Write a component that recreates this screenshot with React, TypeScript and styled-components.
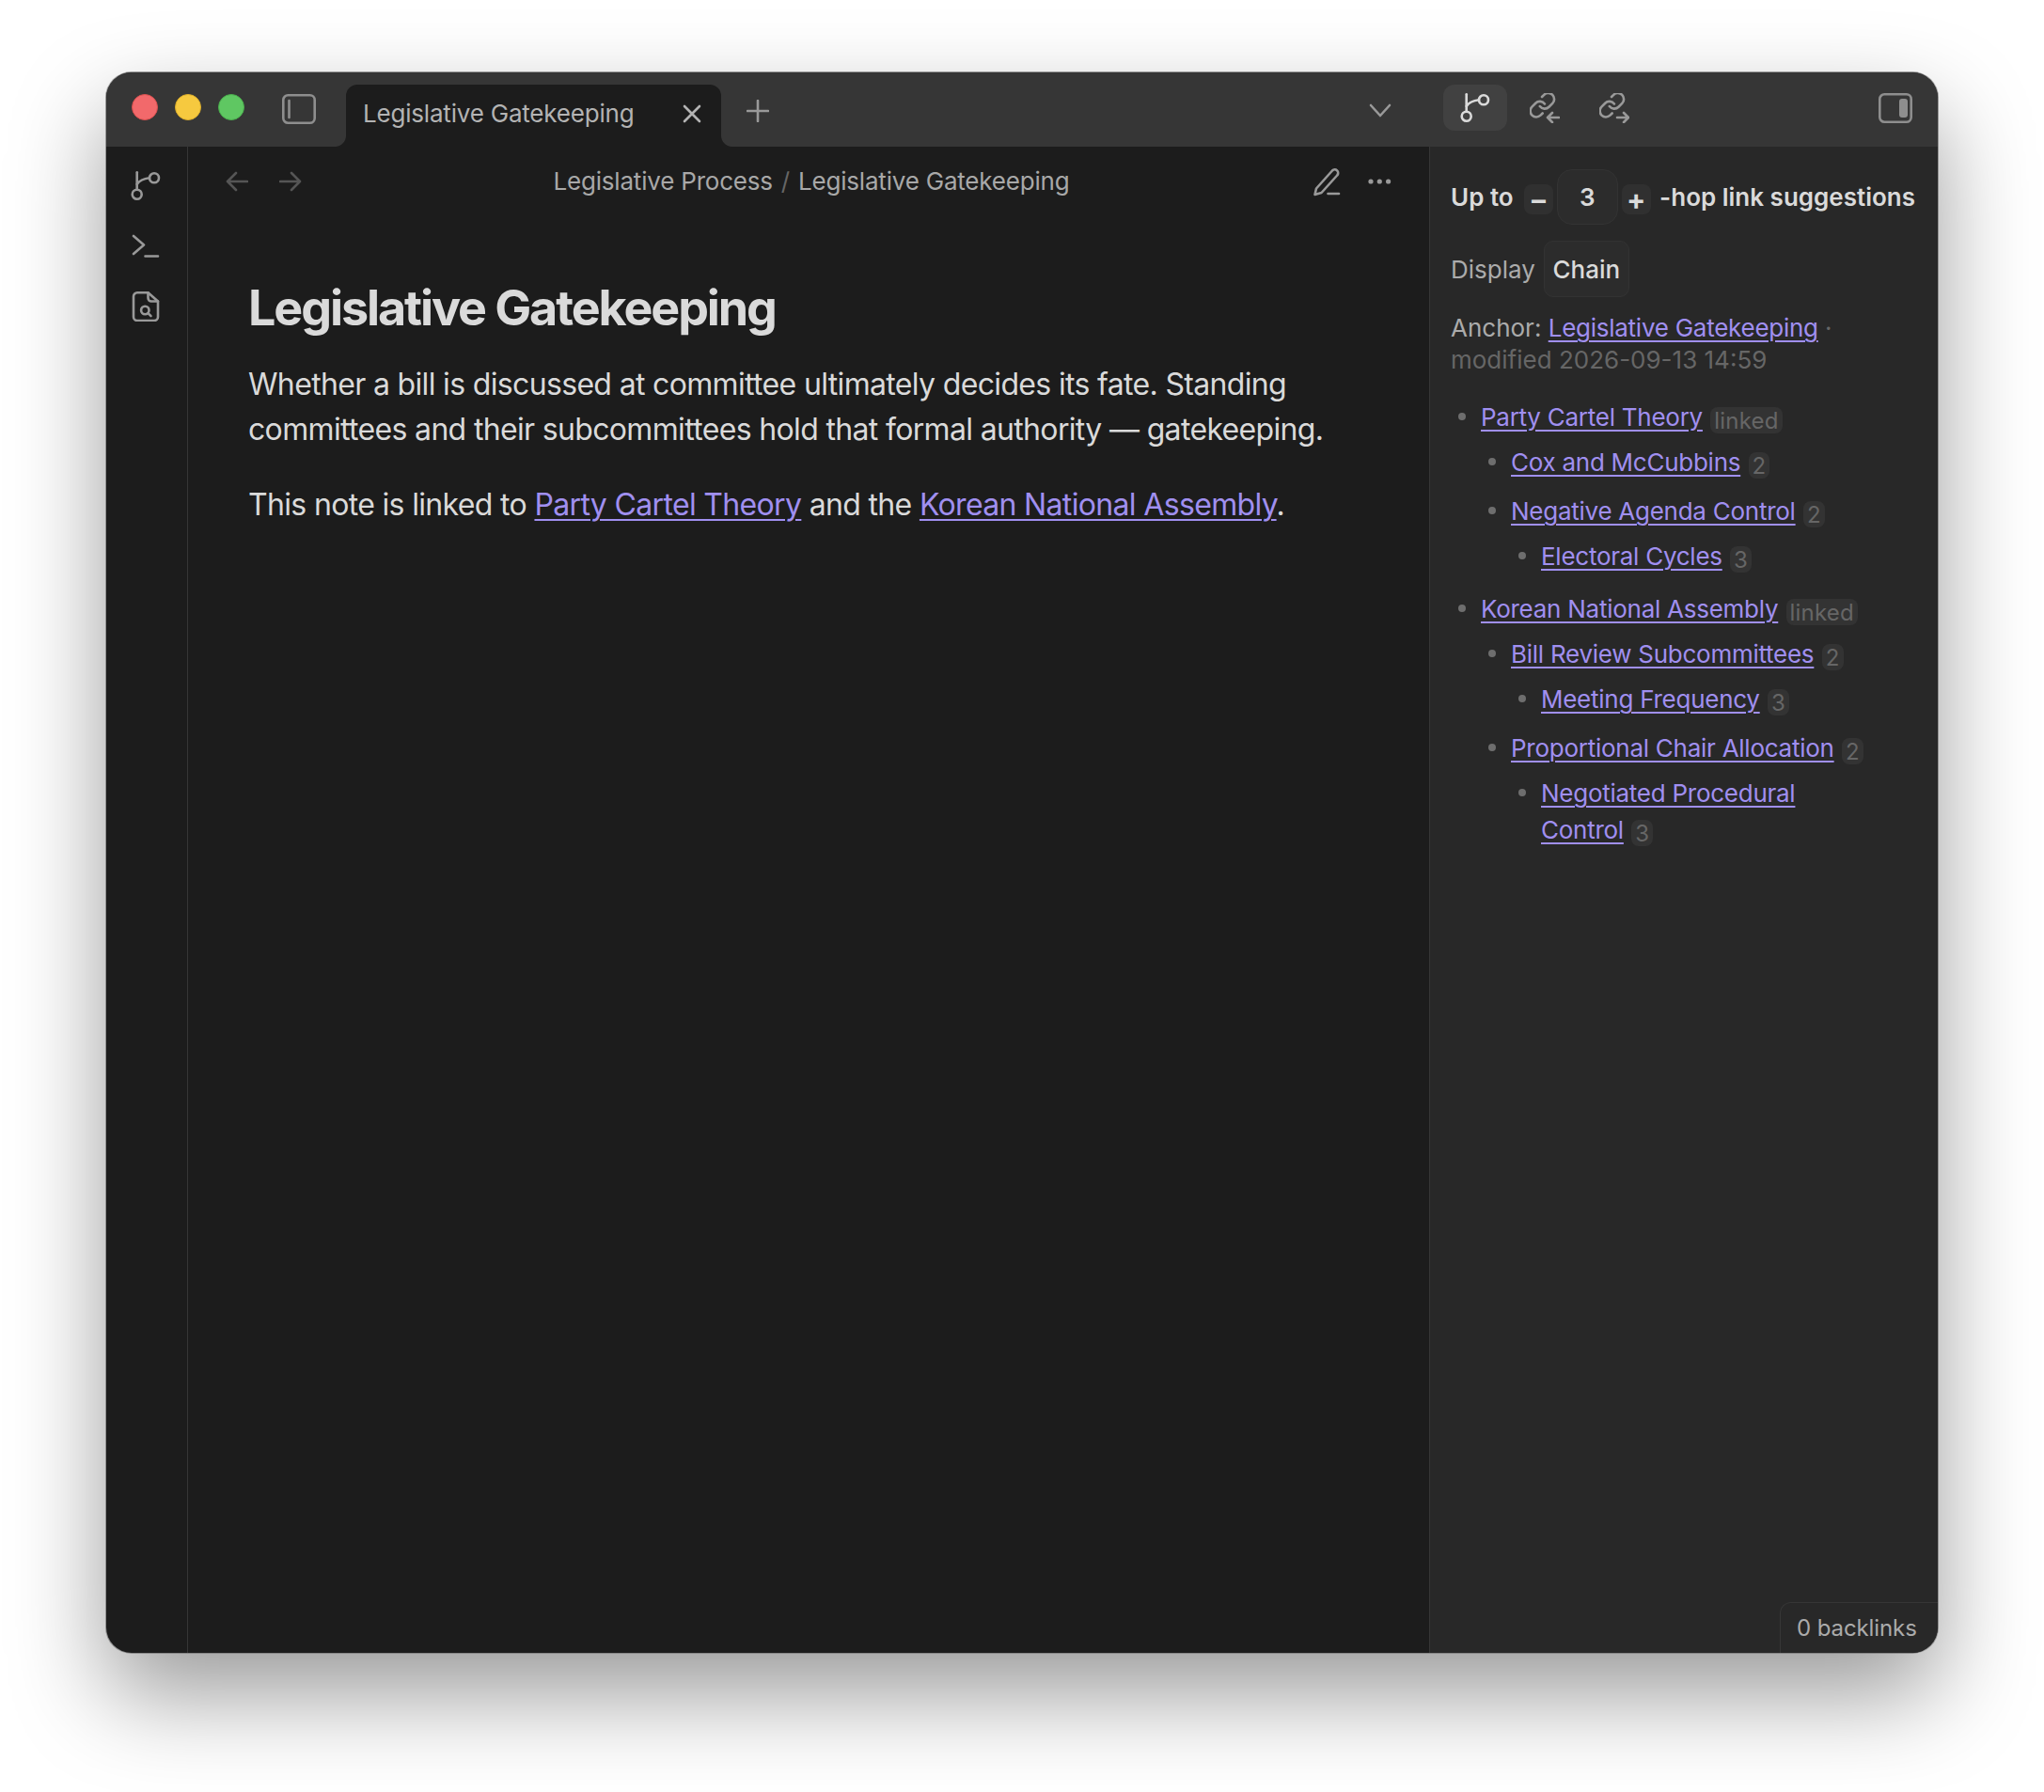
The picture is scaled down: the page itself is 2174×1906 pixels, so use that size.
import React from "react";
import styled, { createGlobalStyle } from "styled-components";

const GlobalStyle = createGlobalStyle`
  html, body {
    margin: 0;
    background: #fff;
  }
  body {
    font-family: Inter, "Liberation Sans", sans-serif;
    color: #dadada;
    overflow: hidden;
  }
`;

const Stage = styled.div`
  box-sizing: border-box;
  width: 2174px;
  height: 1906px;
  padding: 77px 113px 148px;
`;

const Window = styled.div`
  display: flex;
  flex-direction: column;
  height: 100%;
  border-radius: 27px;
  overflow: hidden;
  background: #1c1c1c;
  box-shadow: 0 0 0 1px rgba(120, 120, 120, 0.7), 0 44px 100px 0 rgba(0, 0, 0, 0.4);
`;

const TitleBar = styled.header`
  display: flex;
  flex: none;
  height: 79px;
  background: #363636;
`;

const TabStrip = styled.div`
  display: flex;
  flex: 1;
  align-items: flex-start;
  padding-left: 27px;
`;

const Lights = styled.div`
  display: flex;
  gap: 18px;
  margin-top: 23px;
`;

const Light = styled.span<{ $color: string; $edge: string }>`
  box-sizing: border-box;
  width: 28px;
  height: 28px;
  border-radius: 50%;
  background: ${(p) => p.$color};
  border: 1px solid ${(p) => p.$edge};
`;

const PaneToggle = styled.svg`
  flex: none;
  width: 36px;
  height: 32px;
  margin-top: 23px;
  margin-left: 40px;
`;

const SidePaneToggle = styled(PaneToggle)`
  margin-top: 9px;
  margin-left: auto;
`;

const Tab = styled.div`
  position: relative;
  display: flex;
  align-items: center;
  justify-content: space-between;
  box-sizing: border-box;
  width: 399px;
  height: 66px;
  margin: 13px 0 0 32px;
  padding: 0 21px 5px 18px;
  background: #1c1c1c;
  border-radius: 12px 12px 0 0;
  font-size: 26px;
  letter-spacing: -0.2px;
  color: #b3b3b3;

  &::before,
  &::after {
    content: "";
    position: absolute;
    bottom: 0;
    width: 12px;
    height: 12px;
  }
  &::before {
    left: -12px;
    background: radial-gradient(circle at 0 0, #363636 11.5px, #1c1c1c 12.5px);
  }
  &::after {
    right: -12px;
    background: radial-gradient(circle at 100% 0, #363636 11.5px, #1c1c1c 12.5px);
  }
`;

const StrokeIcon = styled.svg<{ $size?: number; $color?: string }>`
  flex: none;
  display: block;
  width: ${(p) => p.$size ?? 32}px;
  height: ${(p) => p.$size ?? 32}px;
  fill: none;
  stroke: ${(p) => p.$color ?? "#999"};
  stroke-width: 2.6;
  stroke-linecap: round;
  stroke-linejoin: round;
`;

const DotsIcon = styled(StrokeIcon)`
  fill: #999;
  stroke: none;
`;

const NewTab = styled.div`
  margin: 29px 0 0 27px;
`;

const TabMenu = styled.div`
  margin: 28px 40px 0 auto;
`;

const SideTabs = styled.div`
  display: flex;
  flex: none;
  align-items: flex-start;
  box-sizing: border-box;
  width: 541px;
  padding: 13px 27px 0 15px;
`;

const SideTab = styled.div<{ $active?: boolean }>`
  display: flex;
  align-items: center;
  justify-content: center;
  flex: none;
  width: 68px;
  height: 49px;
  margin-right: 6px;
  border-radius: 12px;
  background: ${(p) => (p.$active ? "#414141" : "transparent")};
`;

const Body = styled.div`
  display: flex;
  flex: 1;
  min-height: 0;
`;

const Ribbon = styled.nav`
  display: flex;
  flex: none;
  flex-direction: column;
  align-items: center;
  gap: 32px;
  box-sizing: border-box;
  width: 87px;
  padding: 26px 2px 0 0;
  border-right: 1px solid #363636;
`;

const Main = styled.main`
  flex: 1;
  min-width: 0;
`;

const NavBar = styled.div`
  display: flex;
  align-items: center;
  height: 74px;
  padding: 0 36px 0 40px;
`;

const NavGroup = styled.div<{ $gap: number }>`
  display: flex;
  align-items: center;
  gap: ${(p) => p.$gap}px;
`;

const Crumbs = styled.div`
  flex: 1;
  display: flex;
  justify-content: center;
  gap: 9px;
  padding: 0 0 2px 9px;
  font-size: 26px;
  letter-spacing: -0.2px;
  color: #a8a8a8;
`;

const CrumbSlash = styled.span`
  color: #666;
`;

const Note = styled.article`
  width: 1160px;
  padding: 66px 0 0 64px;
`;

const Title = styled.h1`
  margin: 0 0 25px;
  font-size: 52px;
  line-height: 64px;
  font-weight: 700;
  letter-spacing: -2.1px;
  color: #dadada;
`;

const Para = styled.p`
  margin: 0 0 32px;
  font-size: 32px;
  line-height: 48px;
  letter-spacing: -0.66px;
  color: #dadada;
`;

const Link = styled.a`
  color: #a08ff0;
  text-decoration: underline;
  text-decoration-thickness: 2px;
  text-underline-offset: 4px;
`;

const SideLink = styled(Link)`
  letter-spacing: -0.26px;
`;

const Side = styled.aside`
  position: relative;
  flex: none;
  box-sizing: border-box;
  width: 541px;
  padding: 24px 24px 0 22px;
  background: #282828;
  border-left: 1px solid #363636;
  font-size: 26px;
`;

const HopRow = styled.div`
  display: flex;
  align-items: center;
  height: 59px;
  font-weight: 600;
  color: #dadada;
  white-space: nowrap;
`;

const StepButton = styled.span<{ $before: number; $after: number }>`
  display: flex;
  align-items: center;
  justify-content: center;
  width: 32px;
  height: 32px;
  margin: 4px ${(p) => p.$after}px 0 ${(p) => p.$before}px;
  border-radius: 8px;
  background: #303030;
  font-size: 30px;
  font-weight: 700;
`;

const HopValue = styled.span`
  display: flex;
  align-items: center;
  justify-content: center;
  box-sizing: border-box;
  width: 65px;
  height: 59px;
  border: 1px solid #333;
  border-radius: 16px;
  background: #2c2c2c;
`;

const DisplayRow = styled.div`
  display: flex;
  align-items: center;
  gap: 9px;
  margin-top: 17px;
  color: #ababab;
`;

const ChainBox = styled.span`
  display: flex;
  align-items: center;
  justify-content: center;
  box-sizing: border-box;
  width: 91px;
  height: 60px;
  border: 1px solid #333;
  border-radius: 10px;
  background: #2c2c2c;
  color: #dadada;
  font-weight: 500;
`;

const Anchor = styled.div`
  margin-top: 16px;
  line-height: 34px;
  color: #ababab;
`;

const Faint = styled.span`
  color: #666;
`;

const Tree = styled.ul<{ $root?: boolean }>`
  margin: ${(p) => (p.$root ? "24px 43px 0 0" : "9px 0 0")};
  padding: 0 0 0 32px;
  list-style: none;
`;

const Item = styled.li<{ $root?: boolean }>`
  position: relative;
  line-height: 39px;

  &:not(:first-child) {
    margin-top: ${(p) => (p.$root ? 17 : 13)}px;
  }
  &::before {
    content: "";
    position: absolute;
    left: -24px;
    top: 15px;
    width: 8px;
    height: 8px;
    border-radius: 50%;
    background: #6e6e6e;
  }
`;

const Badge = styled.span`
  display: inline-block;
  margin-left: 1px;
  padding: 0 4px;
  height: 28px;
  line-height: 30px;
  border-radius: 8px;
  background: #333;
  color: #666;
  font-size: 24px;
  letter-spacing: 0.2px;
  vertical-align: -3px;
`;

const Backlinks = styled.div`
  position: absolute;
  right: 0;
  bottom: 0;
  box-sizing: border-box;
  width: 168px;
  height: 54px;
  padding: 12px 0 0 17px;
  border: 1px solid #363636;
  border-width: 1px 0 0 1px;
  border-top-left-radius: 12px;
  font-size: 24px;
  line-height: 29px;
  letter-spacing: -0.1px;
  color: #ababab;
  white-space: nowrap;
`;

const ForkIcon = ({ color }: { color?: string }) => (
  <StrokeIcon viewBox="0 0 32 32" $color={color}>
    <path d="M6.7 1.3v18.2" />
    <circle cx="6.7" cy="24.7" r="5" />
    <circle cx="25" cy="7.3" r="5" />
    <path d="M6.7 14c2.3-3.5 7.3-6 13.3-6.7" />
  </StrokeIcon>
);

const ChainIcon = ({ arrow }: { arrow: string }) => (
  <StrokeIcon viewBox="0 0 32 32">
    <g transform="translate(-2 -2.6) scale(1.28)">
      <path d="M10 13a5 5 0 0 0 7.54.54l3-3a5 5 0 0 0-7.07-7.07l-1.72 1.71" strokeWidth="2.05" />
      <path d="M14 11a5 5 0 0 0-7.54-.54l-3 3a5 5 0 0 0 7.07 7.07l1.71-1.71" strokeWidth="2.05" />
    </g>
    <path d={arrow} />
  </StrokeIcon>
);

type Node = { title: string; badge: string; children?: Node[] };

const suggestions: Node[] = [
  {
    title: "Party Cartel Theory",
    badge: "linked",
    children: [
      { title: "Cox and McCubbins", badge: "2" },
      {
        title: "Negative Agenda Control",
        badge: "2",
        children: [{ title: "Electoral Cycles", badge: "3" }],
      },
    ],
  },
  {
    title: "Korean National Assembly",
    badge: "linked",
    children: [
      {
        title: "Bill Review Subcommittees",
        badge: "2",
        children: [{ title: "Meeting Frequency", badge: "3" }],
      },
      {
        title: "Proportional Chair Allocation",
        badge: "2",
        children: [{ title: "Negotiated Procedural Control", badge: "3" }],
      },
    ],
  },
];

function SuggestionTree({ nodes, root }: { nodes: Node[]; root?: boolean }) {
  return (
    <Tree $root={root}>
      {nodes.map((node) => (
        <Item key={node.title} $root={root}>
          <SideLink>{node.title}</SideLink> <Badge>{node.badge}</Badge>
          {node.children && <SuggestionTree nodes={node.children} />}
        </Item>
      ))}
    </Tree>
  );
}

export default function App() {
  return (
    <Stage>
      <GlobalStyle />
      <Window>
        <TitleBar>
          <TabStrip>
            <Lights>
              <Light $color="#f2696b" $edge="#d8504f" />
              <Light $color="#f6c93f" $edge="#dcae2b" />
              <Light $color="#5fc762" $edge="#4aae4d" />
            </Lights>
            <PaneToggle viewBox="0 0 36 32">
              <rect x="1.3" y="1.3" width="33.4" height="29.4" rx="5" fill="none" stroke="#8e8e8e" strokeWidth="2.6" />
              <path d="M7.5 7v18" stroke="#8e8e8e" strokeWidth="2.6" strokeLinecap="round" />
            </PaneToggle>
            <Tab>
              Legislative Gatekeeping
              <StrokeIcon viewBox="0 0 20 20" $size={20} $color="#b3b3b3">
                <path d="M2 2l16 16M18 2L2 18" />
              </StrokeIcon>
            </Tab>
            <NewTab>
              <StrokeIcon viewBox="0 0 24 24" $size={24} $color="#999">
                <path d="M12 1v22M1 12h22" />
              </StrokeIcon>
            </NewTab>
            <TabMenu>
              <StrokeIcon viewBox="0 0 24 24" $size={24} $color="#999">
                <path d="M2 7l10 11L22 7" />
              </StrokeIcon>
            </TabMenu>
          </TabStrip>
          <SideTabs>
            <SideTab $active>
              <ForkIcon color="#dadada" />
            </SideTab>
            <SideTab>
              <ChainIcon arrow="M19 26h12M24 21l-5 5 5 5" />
            </SideTab>
            <SideTab>
              <ChainIcon arrow="M19 26h12M26 21l5 5-5 5" />
            </SideTab>
            <SidePaneToggle viewBox="0 0 36 32">
              <rect x="1.3" y="1.3" width="33.4" height="29.4" rx="5" fill="none" stroke="#8e8e8e" strokeWidth="2.6" />
              <rect x="22" y="6" width="9" height="20" rx="3" fill="#8e8e8e" />
            </SidePaneToggle>
          </SideTabs>
        </TitleBar>
        <Body>
          <Ribbon>
            <ForkIcon />
            <StrokeIcon viewBox="0 0 32 32">
              <path d="M3 5l11 9.5L3 24M15.5 26.5H29" />
            </StrokeIcon>
            <StrokeIcon viewBox="0 0 32 32">
              <path d="M7 1.3h11.5L29 10.5V27a4 4 0 0 1-4 4H7a4 4 0 0 1-4-4V5.3a4 4 0 0 1 4-4z" />
              <path d="M18.5 1.3V7a3.5 3.5 0 0 0 3.5 3.5h7" />
              <circle cx="15.3" cy="20" r="4.2" />
              <path d="M18.5 23.2l3 3" />
            </StrokeIcon>
          </Ribbon>
          <Main>
            <NavBar>
              <NavGroup $gap={33}>
                <StrokeIcon viewBox="0 0 24 24" $size={24} $color="#555">
                  <path d="M23 12H2M11 3l-9 9 9 9" />
                </StrokeIcon>
                <StrokeIcon viewBox="0 0 24 24" $size={24} $color="#555">
                  <path d="M1 12h21M13 3l9 9-9 9" />
                </StrokeIcon>
              </NavGroup>
              <Crumbs>
                <span>Legislative Process</span>
                <CrumbSlash>/</CrumbSlash>
                <span>Legislative Gatekeeping</span>
              </Crumbs>
              <NavGroup $gap={24}>
                <StrokeIcon viewBox="0 0 32 32">
                  <path d="M2.5 30L4 23.5 21 4.5a3.6 3.6 0 0 1 5.2 5L9.5 28z" />
                  <path d="M16.5 29H28" />
                </StrokeIcon>
                <DotsIcon viewBox="0 0 32 32">
                  <circle cx="6" cy="16" r="2.6" />
                  <circle cx="15.3" cy="16" r="2.6" />
                  <circle cx="24.6" cy="16" r="2.6" />
                </DotsIcon>
              </NavGroup>
            </NavBar>
            <Note>
              <Title>Legislative Gatekeeping</Title>
              <Para>
                Whether a bill is discussed at committee ultimately decides its fate. Standing committees and their
                subcommittees hold that formal authority — gatekeeping.
              </Para>
              <Para>
                This note is linked to <Link>Party Cartel Theory</Link> and the <Link>Korean National Assembly</Link>.
              </Para>
            </Note>
          </Main>
          <Side>
            <HopRow>
              Up to
              <StepButton $before={11} $after={4}>–</StepButton>
              <HopValue>3</HopValue>
              <StepButton $before={4} $after={9}>+</StepButton>
              -hop link suggestions
            </HopRow>
            <DisplayRow>
              Display
              <ChainBox>Chain</ChainBox>
            </DisplayRow>
            <Anchor>
              Anchor: <SideLink>Legislative Gatekeeping</SideLink> <Faint>·</Faint>
              <br />
              <Faint>modified 2026-09-13 14:59</Faint>
            </Anchor>
            <SuggestionTree nodes={suggestions} root />
            <Backlinks>0 backlinks</Backlinks>
          </Side>
        </Body>
      </Window>
    </Stage>
  );
}
